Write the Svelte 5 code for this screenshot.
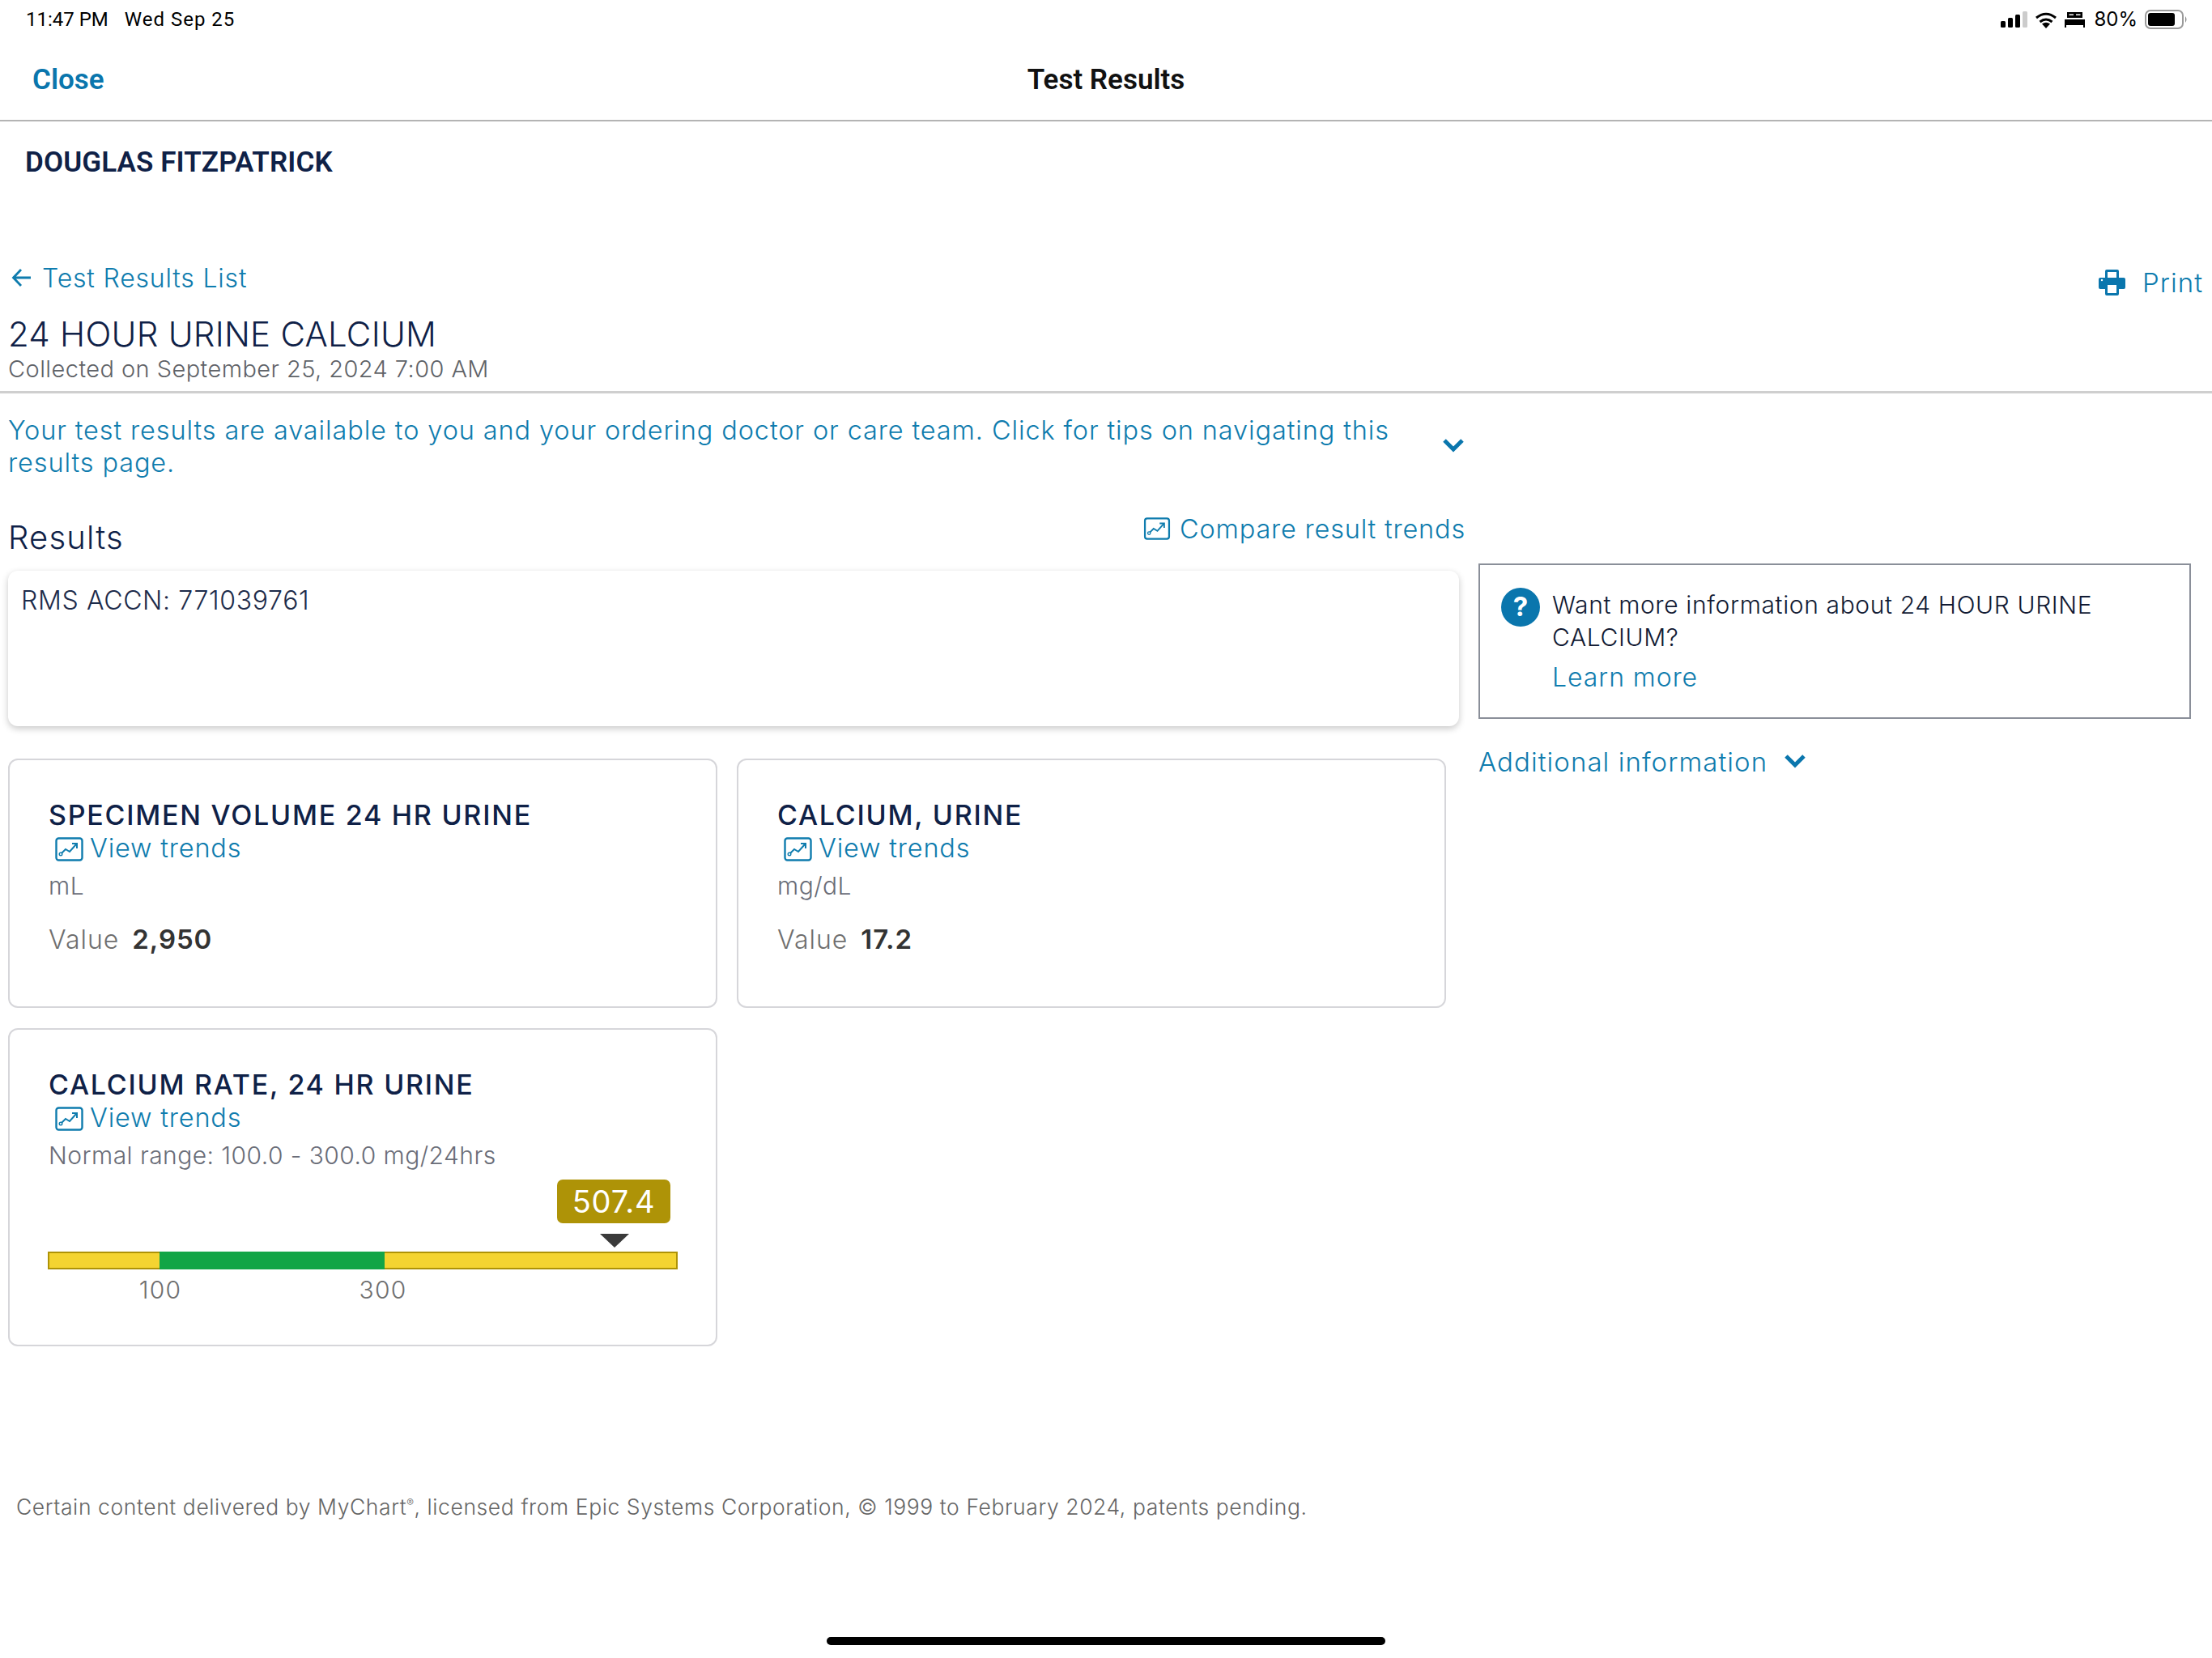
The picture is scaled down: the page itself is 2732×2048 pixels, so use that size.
<script>
  const cards = [
    { title: 'SPECIMEN VOLUME 24 HR URINE', unit: 'mL', value: '2,950' },
    { title: 'CALCIUM, URINE', unit: 'mg/dL', value: '17.2' }
  ];
  const ticks = ['100', '300'];
</script>

{#snippet trend(cls)}
  <svg class={cls} viewBox="0 0 35 30" fill="none" stroke="#0f7cae" aria-hidden="true">
    <rect x="1.5" y="1.5" width="32" height="27" rx="3" stroke-width="2.4" />
    <path d="M8 20 L13 15 L18 18 L26 9" stroke-width="2" />
    <path d="M21 8 H27 V14" stroke-width="2" />
    <circle cx="7" cy="21" r="1.8" stroke-width="1.4" />
  </svg>
{/snippet}

{#snippet chevron(cls)}
  <svg class={cls} viewBox="0 0 28 18" fill="none" stroke="#0a76ad" stroke-width="5" aria-hidden="true">
    <path d="M3 3 L14 14 L25 3" />
  </svg>
{/snippet}

<div class="page">
  <div class="status">
    <div class="clock"><span>11:47 PM</span><span class="date">Wed Sep 25</span></div>
    <div class="sys">
      <svg class="signal" viewBox="0 0 34 20" aria-hidden="true">
        <rect x="0" y="12" width="6" height="8" rx="1.5" fill="#000" />
        <rect x="9" y="8" width="6" height="12" rx="1.5" fill="#000" />
        <rect x="18" y="4" width="6" height="16" rx="1.5" fill="#000" />
        <rect x="27" y="0" width="6" height="20" rx="1.5" fill="#ccc" />
      </svg>
      <svg class="wifi" viewBox="0 0 28 21" aria-hidden="true">
        <path d="M14 21 L9 15.5 Q14 12 19 15.5 Z" fill="#000" />
        <path d="M6.5 13 Q14 7 21.500 13" fill="none" stroke="#000" stroke-width="3" />
        <path d="M2 8 Q14 -1.500 26 8" fill="none" stroke="#000" stroke-width="3" />
      </svg>
      <svg class="bed" viewBox="0 0 25 20" aria-hidden="true">
        <path d="M3 1 H22 V8 H3 Z M5.500 5 H11 V3.500 H5.500 Z M14 5 H19.500 V3.500 H14 Z" fill="#000" fill-rule="evenodd" />
        <path d="M0 10 H25 V20 H23 V17 H2 V20 H0 Z" fill="#000" />
      </svg>
      <span class="pct">80%</span>
      <svg class="battery" viewBox="0 0 53 24" aria-hidden="true">
        <rect x="1" y="1" width="46" height="22" rx="6" fill="none" stroke="#9a9a9a" stroke-width="2" />
        <rect x="4" y="4" width="33" height="16" rx="3" fill="#000" />
        <path d="M50 8 Q53 12 50 16 Z" fill="#8a8a8a" />
      </svg>
    </div>
  </div>

  <div class="nav">
    <span class="close">Close</span>
    <span class="nav-title">Test Results</span>
  </div>

  <div class="patient">DOUGLAS FITZPATRICK</div>

  <header class="head">
    <div class="crumb-row">
      <div class="back">
        <svg class="arrow" viewBox="0 0 24 24" fill="none" stroke="#0f7cae" stroke-width="2.8" aria-hidden="true">
          <path d="M12 2 L2.500 12 L12 22 M3 12 H24" />
        </svg>
        <span>Test Results List</span>
      </div>
      <div class="print">
        <svg class="printer" viewBox="0 0 33 32" aria-hidden="true">
          <path fill-rule="evenodd" fill="#0a76ad" d="M8 2 Q8 0 10 0 H23 Q25 0 25 2 V10 H31 Q33 10 33 12 V22 Q33 24 31 24 H25 V30 Q25 32 23 32 H10 Q8 32 8 30 V24 H2 Q0 24 0 22 V12 Q0 10 2 10 H8 Z M11 3 V10 H22 V3 Z M11 19 V29 H22 V19 Z" />
          <circle cx="4" cy="13" r="1.200" fill="#fff" />
        </svg>
        <span>Print</span>
      </div>
    </div>
    <h1>24 HOUR URINE CALCIUM</h1>
    <div class="collected">Collected on September 25, 2024 7:00 AM</div>
  </header>

  <div class="banner">
    <p>Your test results are available to you and your ordering doctor or care team. Click for tips on navigating this results page.</p>
    {@render chevron('chev')}
  </div>

  <div class="columns">
    <section class="left">
      <div class="results-head">
        <h2>Results</h2>
        <div class="compare">{@render trend('ti small')}<span>Compare result trends</span></div>
      </div>
      <div class="rms">RMS ACCN: 771039761</div>
      <div class="cards">
        {#each cards as c}
          <article class="card">
            <h3>{c.title}</h3>
            <div class="trendlink">{@render trend('ti')}<span>View trends</span></div>
            <div class="sub">{c.unit}</div>
            <div class="val"><span>Value</span><b>{c.value}</b></div>
          </article>
        {/each}
        <article class="card tall">
          <h3>CALCIUM RATE, 24 HR URINE</h3>
          <div class="trendlink">{@render trend('ti')}<span>View trends</span></div>
          <div class="sub">Normal range: 100.0 - 300.0 mg/24hrs</div>
          <div class="badge-row"><div class="badge">507.4</div></div>
          <div class="tri-row"><div class="tri"></div></div>
          <div class="bar"><i class="y1"></i><i class="g"></i><i class="y2"></i></div>
          <div class="scale">
            {#each ticks as t}
              <span>{t}</span>
            {/each}
          </div>
        </article>
      </div>
    </section>

    <aside class="right">
      <div class="info">
        <svg class="q" viewBox="0 0 48 48" aria-hidden="true">
          <circle cx="24" cy="24" r="24" fill="#0a76ad" />
          <text x="24" y="35" text-anchor="middle" font-size="33" font-weight="700" font-family="Inter, sans-serif" fill="#fff">?</text>
        </svg>
        <div class="info-body">
          <p>Want more information about 24 HOUR URINE CALCIUM?</p>
          <div class="learn">Learn more</div>
        </div>
      </div>
      <div class="additional"><span>Additional information</span>{@render chevron('chev2')}</div>
    </aside>
  </div>

  <footer class="foot">Certain content delivered by MyChart<sup>®</sup>, licensed from Epic Systems Corporation, © 1999 to February 2024, patents pending.</footer>
  <div class="home"></div>
</div>

<style>
  :global(body) { margin: 0; background: #fff; }
  .page {
    width: 2732px; height: 2048px; position: relative; overflow: hidden;
    font-family: Inter, "Liberation Sans", sans-serif; font-weight: 300; color: #0f2147;
  }
  h1, h2, h3, p { margin: 0; font-weight: inherit; }

  .status { height: 48px; display: flex; align-items: center; justify-content: space-between; padding: 0 30px 0 32px; }
  .clock { display: flex; gap: 20px; font: 400 24px/1 Roboto, sans-serif; color: #000; }
  .date { letter-spacing: 1px; }
  .sys { display: flex; align-items: center; }
  .signal { width: 34px; height: 20px; margin-right: 8px; }
  .wifi { width: 28px; height: 21px; margin-right: 9px; }
  .bed { width: 25px; height: 20px; margin-right: 11px; }
  .pct { font: 400 24px/1 Inter, sans-serif; color: #000; margin-right: 9px; }
  .battery { width: 53px; height: 24px; }

  .nav { height: 100px; border-bottom: 2px solid #b4b4b4; box-sizing: content-box; position: relative; display: flex; align-items: center; padding-left: 40px; }
  .close { font: 600 35px/1 Roboto, sans-serif; color: #0a76ad; }
  .nav-title { font: 600 35px/1 Roboto, sans-serif; color: #111; position: absolute; left: 0; right: 0; text-align: center; }

  .patient { padding: 31px 0 0 31px; height: 112px; font: 600 35px/40px Roboto, sans-serif; color: #0f2147; letter-spacing: .1px; box-sizing: border-box; }

  .head { padding: 61px 10px 0; height: 224px; box-sizing: border-box; border-bottom: 3px solid #cfcfcf; }
  .crumb-row { display: flex; justify-content: space-between; height: 64px; padding-right: 1px; }
  .back { display: flex; align-items: center; gap: 14px; color: #0f7cae; font-size: 32px; letter-spacing: .8px; padding-left: 4px; height: 40px; }
  .arrow { width: 24px; height: 24px; }
  .print { display: flex; align-items: center; gap: 21px; color: #0f7cae; font-size: 33px; letter-spacing: 1px; height: 52px; }
  .printer { width: 33px; height: 32px; }
  h1 { font-size: 42px; line-height: 50px; font-weight: 300; letter-spacing: .25px; margin-top: 1px; }
  .collected { font-size: 29px; line-height: 36px; color: #5f6368; font-weight: 300; letter-spacing: .43px; }

  .banner { display: flex; padding: 26px 0 0 10px; width: 1810px; align-items: flex-start; }
  .banner p { width: 1740px; font-size: 32.500px; line-height: 40px; color: #0f7cae; letter-spacing: .88px; }
  .chev { width: 28px; height: 18px; margin: 29px 0 0 31px; flex: none; }

  .columns { display: grid; grid-template-columns: 1816px 880px; margin-top: 39px; padding-left: 10px; column-gap: 0; }
  .results-head { display: flex; justify-content: space-between; height: 74px; width: 1800px; }
  h2 { font-size: 40px; line-height: 48px; margin-top: 9px; font-weight: 300; letter-spacing: 1.2px; }
  .compare { display: flex; align-items: center; gap: 11px; height: 44px; color: #0f7cae; font-size: 32.500px; letter-spacing: .8px; }
  .ti { width: 35px; height: 30px; display: block; }
  .ti.small { width: 34px; height: 28px; }

  .rms { width: 1792px; height: 192px; box-sizing: border-box; background: #fff; border-radius: 12px; padding: 17px 16px; font-size: 32px; line-height: 40px; letter-spacing: .65px; color: #1d2b4a; box-shadow: 0 3px 8px rgba(0,0,0,.22); }

  .cards { display: grid; grid-template-columns: 876px 876px; column-gap: 24px; row-gap: 25px; margin-top: 40px; align-items: start; }
  .card { height: 308px; box-sizing: border-box; border: 2px solid #d6d6da; border-radius: 12px; padding: 48px 48px 0; }
  .card.tall { height: 393px; }
  h3 { font-size: 34px; line-height: 40px; font-weight: 500; color: #0f2147; letter-spacing: 1.75px; }
  .trendlink { display: flex; align-items: center; height: 42px; padding-left: 8px; gap: 8px; color: #0f7cae; font-size: 32.500px; letter-spacing: .8px; margin-top: -1px; }
  .trendlink .ti { margin-top: 4px; }
  .sub { margin-top: 6px; font-size: 30px; line-height: 40px; letter-spacing: .45px; color: #6a6d78; }
  .val { margin-top: 26px; display: flex; gap: 16px; align-items: baseline; font-size: 32px; line-height: 40px; letter-spacing: 1px; color: #6f6f6f; }
  .val b { font-weight: 600; color: #333; font-size: 33px; letter-spacing: .9px; }

  .badge-row { display: flex; justify-content: flex-end; margin-top: 10px; padding-right: 8px; }
  .badge { width: 140px; height: 54px; border-radius: 7px; background: #ae9307; color: #fff; text-align: center; font-size: 38px; letter-spacing: .8px; font-weight: 400; line-height: 54px; }
  .tri-row { display: flex; justify-content: flex-end; margin-top: 13px; padding-right: 59px; height: 22px; }
  .tri { width: 0; height: 0; border-left: 18px solid transparent; border-right: 18px solid transparent; border-top: 17px solid #3a3a3a; }
  .bar { display: flex; width: 778px; height: 22px; box-sizing: border-box; border: 2px solid #ae9307; margin-left: -1px; }
  .bar i { display: block; height: 100%; }
  .y1 { width: 136px; background: #f4d431; }
  .g { width: 278px; background: #12a546; margin-top: -2px; margin-bottom: -2px; height: 22px !important; }
  .y2 { flex: 1; background: #f4d431; }
  .scale { display: flex; margin-top: 7px; font-size: 30px; line-height: 36px; letter-spacing: 1.2px; color: #6f6f6f; padding-left: 88px; gap: 175px; }
  .scale span { width: 100px; text-align: center; }

  .info { display: flex; height: 192px; box-sizing: border-box; border: 2px solid #8a8f99; margin-top: 65px; padding: 28px 0 0 26px; gap: 15px; }
  .right { width: 880px; }
  .q { width: 48px; height: 48px; flex: none; }
  .info-body { width: 800px; }
  .info-body p { font-size: 30px; line-height: 40px; color: #111a33; font-weight: 300; letter-spacing: .63px; margin-top: 1px; }
  .learn { color: #0f7cae; font-size: 32px; line-height: 40px; letter-spacing: .95px; margin-top: 10px; }
  .additional { display: flex; align-items: center; gap: 20px; margin-top: 33px; color: #0f7cae; font-size: 33px; line-height: 40px; letter-spacing: 1.05px; }
  .chev2 { width: 28px; height: 18px; margin-top: -2px; }

  .foot { position: absolute; left: 20px; top: 1845px; font-size: 26.500px; line-height: 32px; letter-spacing: .58px; color: #666; }
  .foot sup { font-size: 13px; line-height: 0; }
  .home { position: absolute; left: 1021px; top: 2022px; width: 690px; height: 10px; border-radius: 5px; background: #000; }
</style>
